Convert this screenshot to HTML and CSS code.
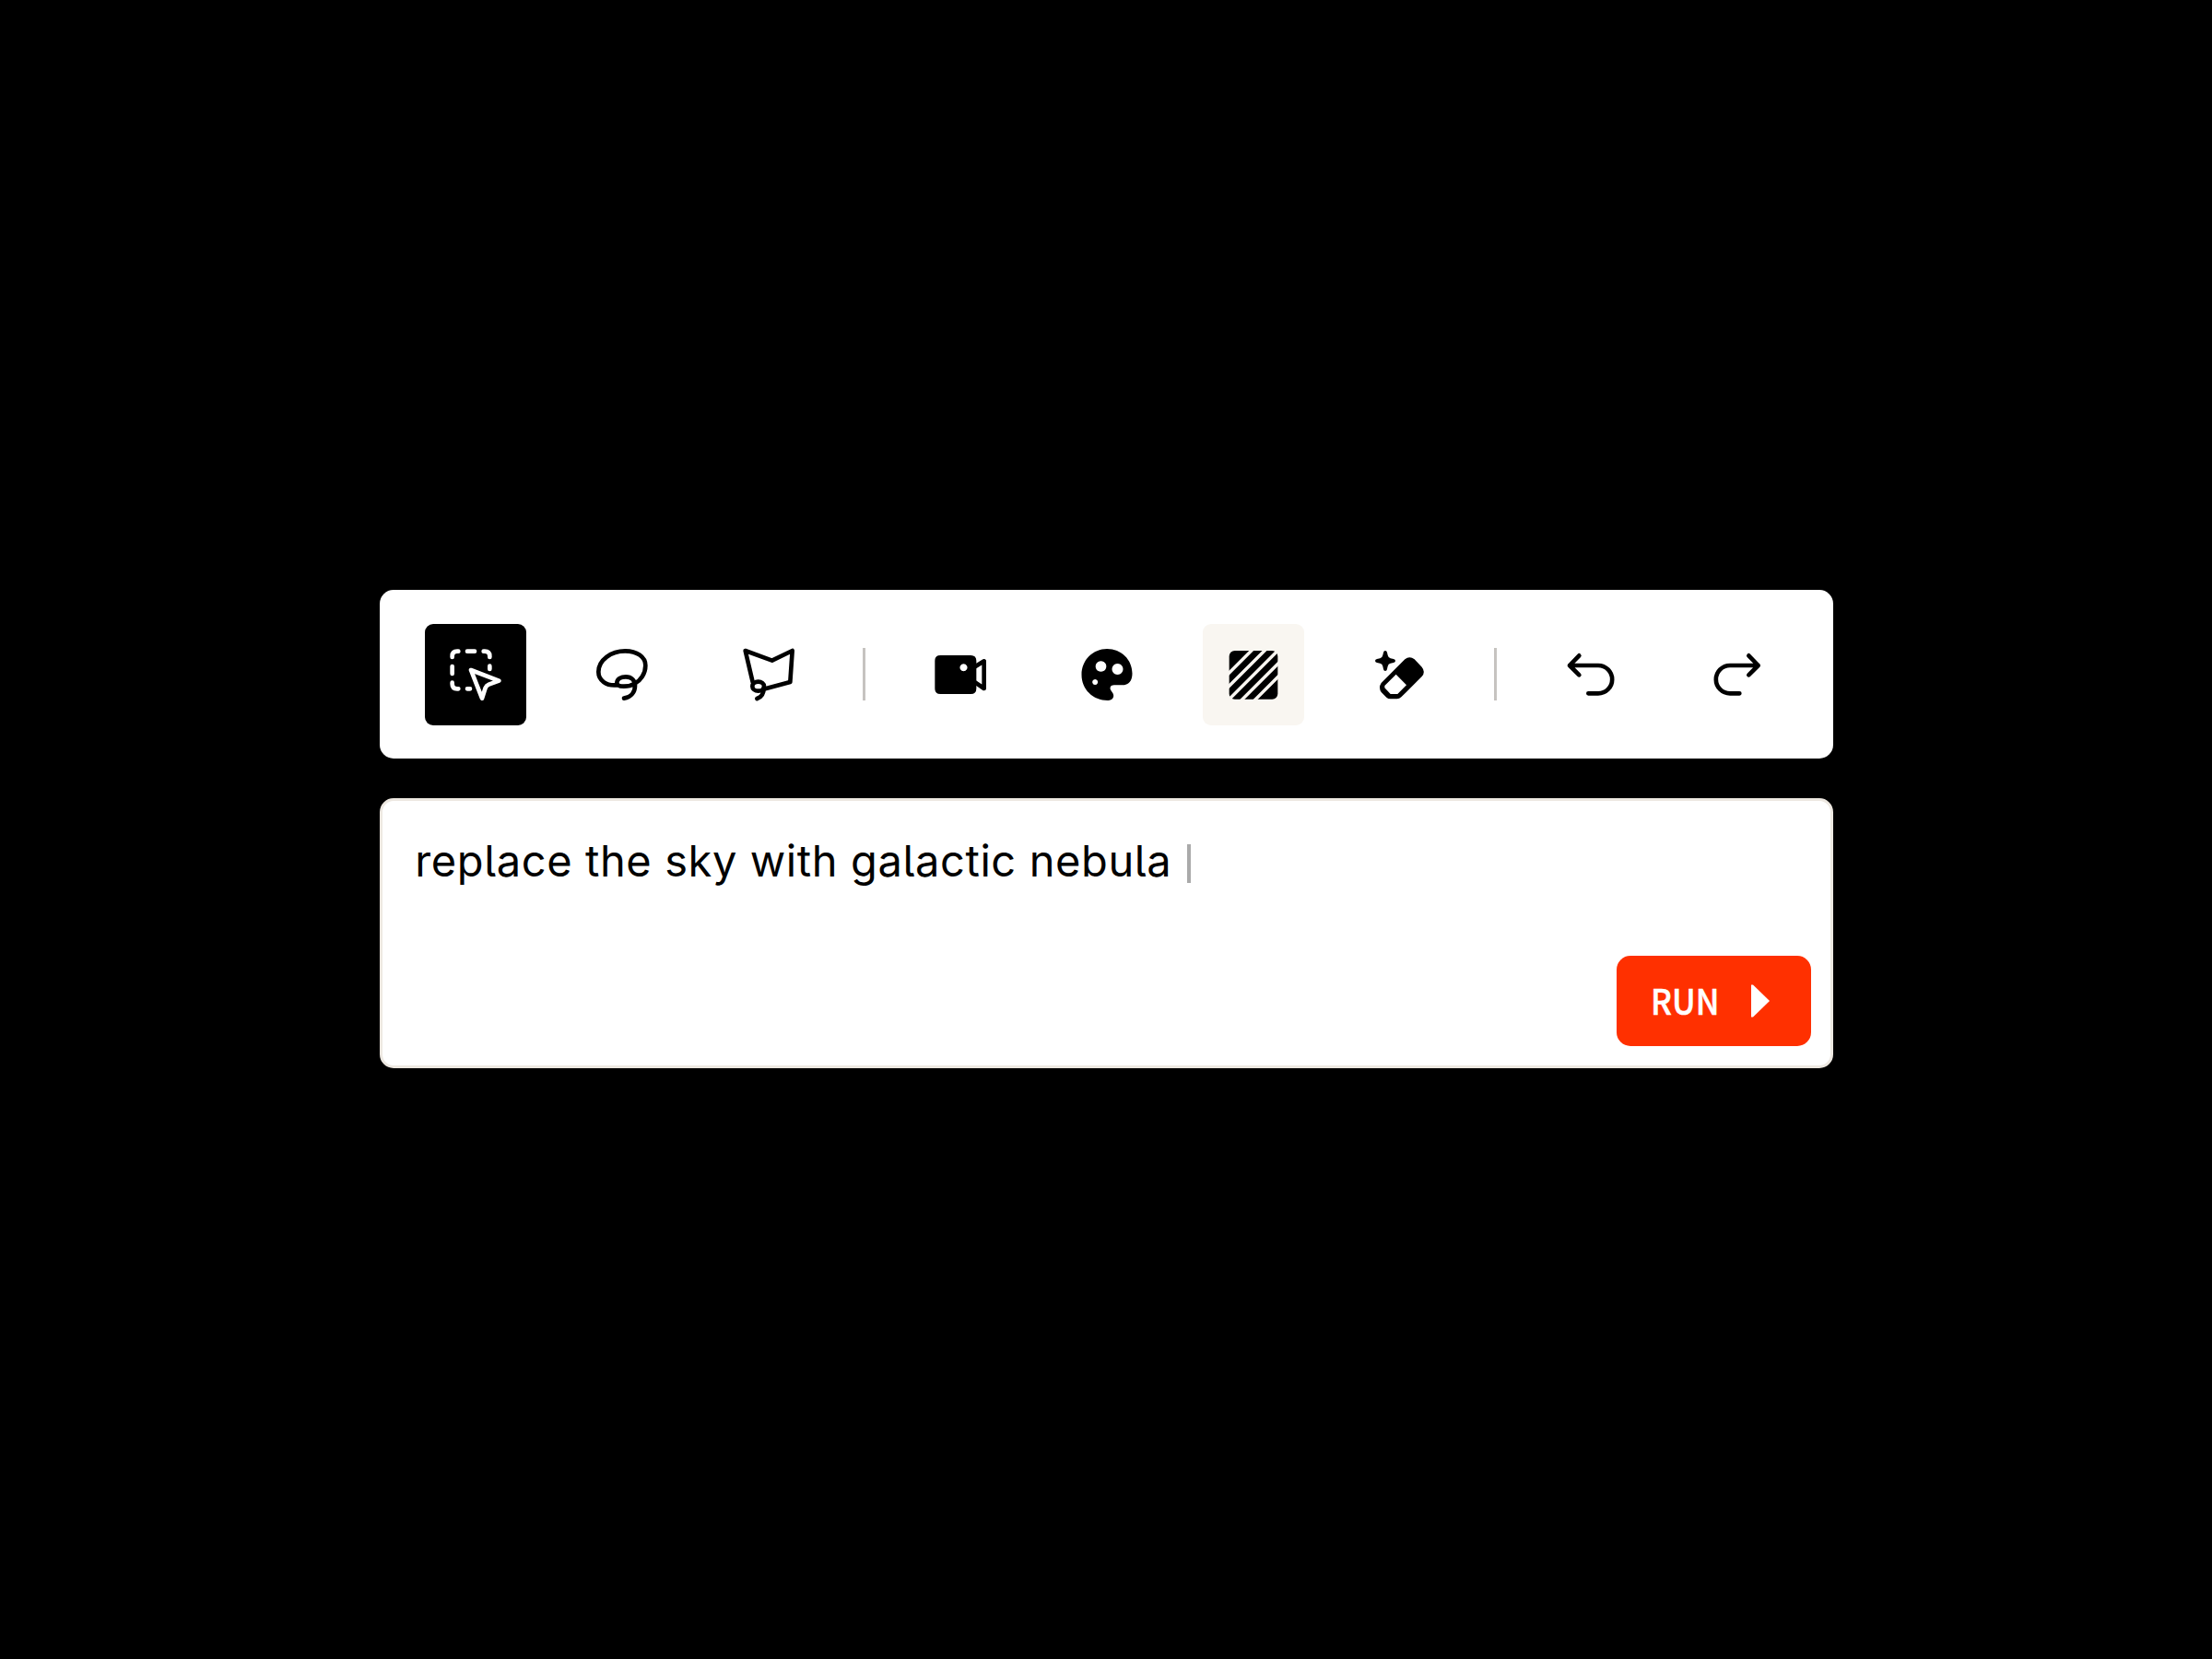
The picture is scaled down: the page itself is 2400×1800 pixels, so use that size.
FILE: index.html
```html
<!DOCTYPE html>
<html lang="en">
<head>
    <meta charset="UTF-8">
    <meta name="viewport" content="width=device-width, initial-scale=1.0">
    <title>Image Editor</title>
    <link rel="stylesheet" href="styles.css">
</head>
<body>
    <div class="editor">
        <!-- Toolbar -->
        <div class="toolbar">
            <button class="tool active" aria-label="Select">
                <svg class="line" viewBox="250 207 198 198">
                    <path d="M273 249v-3q0-16 16-16h4M322 230h24M375 230h4q16 0 16 16v3M395 278v10M273 279v24M273 332v4q0 16 16 16h4M322 352h9"/>
                    <path d="M334 291L425 326L392 338Q384 341 381 349L370 383Z"/>
                </svg>
            </button>
            <button class="tool" aria-label="Lasso">
                <svg class="line" viewBox="67 57 198 198">
                    <path d="M148 190C115 193 89 175 89 147C89 108 130 79 176 79C214 79 242 98 242 126C242 153 226 175 207 185C195 192 185 194 172 194C156 194 149 190 149 182C150 170 162 163 178 163C197 163 208 175 208 192C208 212 196 229 172 233"/>
                </svg>
            </button>
            <button class="tool" aria-label="Polygonal lasso">
                <svg class="line" viewBox="63 57 198 198">
                    <path d="M110 180L86 78L173 110L239 78L232 180L151 202"/>
                    <ellipse cx="128" cy="194" rx="19" ry="15"/>
                    <path d="M146 200C146 218 138 229 124 234"/>
                </svg>
            </button>
            <div class="divider"></div>
            <button class="tool" aria-label="Video">
                <svg viewBox="56 57 198 198">
                    <path fill-rule="evenodd" d="M90 93H189Q207 93 207 111V201Q207 219 189 219H90Q72 219 72 201V111Q72 93 90 93ZM165.500 121a12 12 0 1 0 .01 0Z"/>
                    <path class="stroke" d="M203 130L232 112V201L203 181"/>
                </svg>
            </button>
            <button class="tool" aria-label="Palette">
                <svg viewBox="52.5 57 198 198">
                    <path fill-rule="evenodd" d="M152 72C198 72 234 107 234 152C234 176 223 190 200 190H175C163 190 159 199 165 208L171 217C177 228 170 240 155 240C105 240 69 203 69 156C69 108 106 72 152 72ZM132 111.500a17.500 17.500 0 1 0 .01 0ZM186 120a18 18 0 1 0 .01 0ZM113 171a9 9 0 1 0 .01 0Z"/>
                </svg>
            </button>
            <button class="tool hover" aria-label="Texture">
                <svg viewBox="94 102 198 198">
                    <rect x="114" y="123" width="158" height="158" rx="18"/>
                    <path class="stripes" d="M99 210L210 99M99 253L253 99M99 296L296 99M142 296L296 142M185 296L296 185"/>
                </svg>
            </button>
            <button class="tool" aria-label="Magic eraser">
                <svg viewBox="45 57 198 198">
                    <path d="M99 78Q104 78 105 84Q107 95 110 99Q114 103 126 105Q132 106 132 111Q132 115 126 117Q114 119 110 122Q107 126 105 138Q104 144 99 144Q94 144 93 138Q91 126 88 122Q84 119 72 117Q66 115 66 111Q66 106 72 105Q84 103 88 99Q91 95 93 84Q94 78 99 78Z"/>
                    <path fill-rule="evenodd" d="M163 106Q178 93 194 106L218 131Q231 147 218 162L151 229Q145 235 137 235H116Q108 235 103 230L86 213Q76 198 86 183ZM134 155L97 192V199L116 219H139L168 190Z"/>
                </svg>
            </button>
            <div class="divider"></div>
            <button class="tool" aria-label="Undo">
                <svg class="line" viewBox="39 57 198 198">
                    <path d="M100 94L69 126L100 157M69 126H162a45.500 45.500 0 0 1 0 91H130"/>
                </svg>
            </button>
            <button class="tool" aria-label="Redo">
                <svg class="line" viewBox="516 57 198 198">
                    <path d="M652 94L683 126L652 157M683 126H591a45.500 45.500 0 0 0 0 91H622"/>
                </svg>
            </button>
        </div>

        <!-- Prompt -->
        <div class="prompt">
            <div class="prompt-text">
                <span>replace the sky with galactic nebula</span>
                <span class="caret"></span>
            </div>
            <button class="run-btn">
                <span class="run-label">RUN</span>
                <svg class="play" viewBox="0 0 20 36">
                    <path d="M0 .5H2L20 18L2 35.500H0Z"/>
                </svg>
            </button>
        </div>
    </div>
</body>
</html>
```
FILE: styles.css
```css
* {
    margin: 0;
    padding: 0;
    box-sizing: border-box;
}

body {
    font-family: Inter, "Liberation Sans", sans-serif;
    background: #000;
    display: flex;
    justify-content: center;
    align-items: center;
    height: 100vh;
    overflow: hidden;
}

button {
    border: none;
    cursor: pointer;
}

.editor {
    width: 1577px;
    margin-left: 1.5px;
    margin-bottom: 1px;
    display: flex;
    flex-direction: column;
    gap: 43px;
}

/* Toolbar */
.toolbar {
    height: 183px;
    padding: 0 49px;
    background: #fff;
    border-radius: 15px;
    display: flex;
    align-items: center;
    justify-content: space-between;
}

.tool {
    width: 110px;
    height: 110px;
    border-radius: 9px;
    background: transparent;
    color: #000;
    display: flex;
    align-items: center;
    justify-content: center;
}

.tool.active {
    background: #000;
    color: #fff;
}

.tool.hover {
    background: #f9f6f1;
}

.tool svg {
    width: 66px;
    height: 66px;
    fill: currentColor;
}

.tool .line,
.tool .stroke {
    fill: none;
    stroke: currentColor;
    stroke-width: 14;
    stroke-linecap: round;
    stroke-linejoin: round;
}

.stripes {
    stroke: #f9f6f1;
    stroke-width: 10.5;
}

.divider {
    width: 3px;
    height: 57px;
    margin: 0 -1.5px;
    background: #c6c3c0;
}

/* Prompt box */
.prompt {
    height: 293px;
    padding: 34px 21px 21px 35px;
    background: #fff;
    border: 3px solid #ede8e1;
    border-radius: 15px;
    display: flex;
    flex-direction: column;
    justify-content: space-between;
}

.prompt-text {
    display: flex;
    align-items: center;
    gap: 17px;
    height: 62px;
    font-size: 47px;
    line-height: 62px;
    letter-spacing: 0.6px;
    font-feature-settings: "cv05";
    color: #000;
}

.caret {
    width: 4px;
    height: 42px;
    margin-top: 6px;
    background: #aaa;
}

.run-btn {
    align-self: flex-end;
    width: 211px;
    height: 98px;
    padding: 0 45px 0 37px;
    border-radius: 15px;
    background: #ff3000;
    color: #fff;
    font-family: "Noto Sans CJK JP", sans-serif;
    font-size: 38.5px;
    font-weight: 500;
    line-height: 94px;
    display: flex;
    align-items: center;
    justify-content: space-between;
}

/* Condensed caps */
.run-label {
    height: 98px;
    transform: scaleX(0.91);
    transform-origin: left center;
    -webkit-text-stroke: 0.5px #fff;
}

.play {
    width: 20px;
    height: 36px;
    fill: #fff;
}
```
